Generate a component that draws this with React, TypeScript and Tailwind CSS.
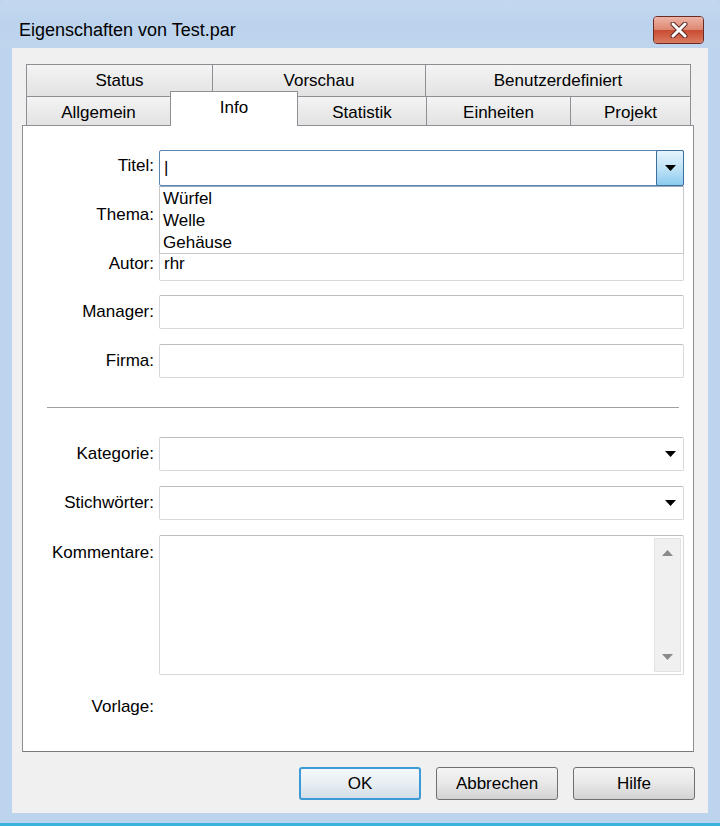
import React from "react";

const font = { fontFamily: '"Liberation Sans", Arial, sans-serif' };

function Tab({ label, w, first }: { label: string; w: number; first?: boolean }) {
  return (
    <div
      className={`h-full border border-b-0 border-[#8e8f95] bg-gradient-to-b from-[#f4f4f4] to-[#e2e2e2] text-center text-[17px] leading-[20px] pt-[6px] text-black ${first ? "" : "-ml-px"}`}
      style={{ width: w }}
    >
      {label}
    </div>
  );
}

function Arrow() {
  return (
    <svg width="11" height="6" viewBox="0 0 11 6">
      <path d="M0 0 H11 L5.5 6 Z" fill="#000" />
    </svg>
  );
}

function Field({ children, className = "" }: { children?: React.ReactNode; className?: string }) {
  return (
    <div
      className={`w-[525px] bg-white border border-[#d5d9de] border-t-[#b9bcc1] rounded-[2px] flex items-center ${className}`}
    >
      {children}
    </div>
  );
}

function Row({ label, children, className = "", labelClass = "" }: { label: string; children?: React.ReactNode; className?: string; labelClass?: string }) {
  return (
    <div className={`flex items-center ${className}`}>
      <div className={`w-[132px] text-right text-[17px] leading-[20px] pr-[1px] ${labelClass}`}>{label}</div>
      <div className="ml-[4px]">{children}</div>
    </div>
  );
}

function Button({ label, focused, w }: { label: string; focused?: boolean; w: number }) {
  return (
    <div
      className={`h-[33px] rounded-[3px] flex items-center justify-center text-[17px] ${
        focused
          ? "border-2 border-[#3c9ad6] bg-gradient-to-b from-[#f4f8fb] via-[#e8eef3] to-[#d4dee6]"
          : "border border-[#707070] bg-gradient-to-b from-[#f4f4f4] via-[#e8e8e8] to-[#d2d2d2]"
      }`}
      style={{ width: w }}
    >
      {label}
    </div>
  );
}

export default function App() {
  return (
    <div className="w-[720px] h-[826px] flex flex-col bg-[#bdd4ee] text-black" style={font}>
      {/* Title bar */}
      <div className="h-[48px] flex items-start bg-gradient-to-b from-[#c3d8f0] via-[#bcd3ed] to-[#bfd5ee] rounded-t-[6px]">
        <div className="ml-[19px] mt-[19px] text-[18px] leading-[22px] text-black">Eigenschaften von Test.par</div>
        <div className="ml-auto mr-[16px] mt-[16px] w-[51px] h-[28px] rounded-[4px] border border-[#6b2a22] overflow-hidden flex flex-col relative">
          <div className="h-[13px] bg-gradient-to-b from-[#ecb4a6] to-[#dc8670]" />
          <div className="flex-1 bg-gradient-to-b from-[#c94a31] to-[#d97a5f]" />
          <svg className="absolute left-[16px] top-[5px]" width="18" height="16" viewBox="0 0 18 16">
            <path d="M3 2 L15 14 M15 2 L3 14" stroke="#5b2a26" strokeWidth="5" strokeLinecap="round" />
            <path d="M3 2 L15 14 M15 2 L3 14" stroke="#ffffff" strokeWidth="3" strokeLinecap="round" />
          </svg>
        </div>
      </div>

      {/* Client area */}
      <div className="mx-[12px] h-[765px] bg-[#f0f0f0] pt-[16px] pl-[10px] pr-[14px] flex flex-col">
        {/* Tabs */}
        <div className="pl-[4px] flex flex-col">
          <div className="flex h-[32px]">
            <Tab label="Status" w={187} first />
            <Tab label="Vorschau" w={214} />
            <Tab label="Benutzerdefiniert" w={266} />
          </div>
          <div className="flex h-[29px] items-end">
            <div className="h-full flex">
              <Tab label="Allgemein" w={145} first />
            </div>
            <div className="-ml-px h-[35px] mb-[-1px] w-[128px] relative z-10 bg-white border border-b-0 border-[#8e8f95] text-center text-[17px] leading-[20px] pt-[6px]">
              Info
            </div>
            <div className="h-full flex -ml-px">
              <Tab label="Statistik" w={130} first />
              <Tab label="Einheiten" w={145} />
              <Tab label="Projekt" w={121} />
            </div>
          </div>
        </div>

        {/* Panel */}
        <div className="h-[627px] w-[672px] bg-white border border-[#8e8f95] border-b-[#7a7a7a] relative pt-[24px]">
          <Row label="Titel:" labelClass="-mt-[5px]">
            <div className="w-[525px] h-[36px] bg-white border border-[#5a86b3] rounded-[2px] flex items-center relative">
              <span className="ml-[4px] text-[17px] leading-[20px] font-light">|</span>
              <div className="absolute right-[-1px] top-[-1px] w-[28px] h-[36px] border border-[#3c6f9b] rounded-[2px] bg-gradient-to-b from-[#e6f4fc] via-[#bfe3f7] to-[#8ccbee] flex items-center justify-center">
                <Arrow />
              </div>
            </div>
          </Row>
          <Row label="Thema:" className="mt-[12px]">
            <Field className="h-[34px]" />
          </Row>
          <Row label="Autor:" className="mt-[15px]">
            <Field className="h-[34px]">
              <span className="ml-[4px] text-[17px] leading-[20px]">rhr</span>
            </Field>
          </Row>
          <Row label="Manager:" className="mt-[14px]">
            <Field className="h-[34px]" />
          </Row>
          <Row label="Firma:" className="mt-[15px]">
            <Field className="h-[34px]" />
          </Row>

          <div className="ml-[24px] mt-[29px] w-[632px] h-[2px] border-t border-[#a0a0a0] border-b border-b-white" />

          <Row label="Kategorie:" className="mt-[28px]">
            <Field className="h-[34px] justify-end pr-[7px]">
              <Arrow />
            </Field>
          </Row>
          <Row label="Stichwörter:" className="mt-[15px]">
            <Field className="h-[34px] justify-end pr-[7px]">
              <Arrow />
            </Field>
          </Row>
          <div className="flex items-start mt-[15px]">
            <div className="w-[132px] text-right text-[17px] leading-[20px] pt-[8px] pr-[1px]">Kommentare:</div>
            <div className="ml-[4px] w-[525px] h-[140px] bg-white border border-[#d5d9de] border-t-[#b9bcc1] rounded-[2px] flex justify-end p-[2px]">
              <div className="w-[27px] h-full bg-[#f0f0f0] border border-[#e2e2e2] flex flex-col items-center justify-between py-[11px]">
                <svg width="11" height="6" viewBox="0 0 11 6">
                  <path d="M0 6 H11 L5.5 0 Z" fill="#8a8a8a" />
                </svg>
                <svg width="11" height="6" viewBox="0 0 11 6">
                  <path d="M0 0 H11 L5.5 6 Z" fill="#8a8a8a" />
                </svg>
              </div>
            </div>
          </div>
          <Row label="Vorlage:" className="mt-[22px]" />

          {/* Dropdown list overlay */}
          <div className="absolute left-[136px] top-[60px] w-[525px] h-[68px] bg-white border border-[#c8c8c8] border-t-[#9aaabb] z-20 pl-[3px] pt-[1px] text-[17px] leading-[22px]">
            <div>Würfel</div>
            <div>Welle</div>
            <div>Gehäuse</div>
          </div>
        </div>

        {/* Buttons */}
        <div className="flex justify-end gap-[15px] mt-[15px] -mr-[1px]">
          <Button label="OK" focused w={122} />
          <Button label="Abbrechen" w={122} />
          <Button label="Hilfe" w={122} />
        </div>
      </div>

      <div className="flex-1 flex flex-col justify-end">
        <div className="h-[3px] bg-[#3ab3dc]" />
      </div>
    </div>
  );
}
